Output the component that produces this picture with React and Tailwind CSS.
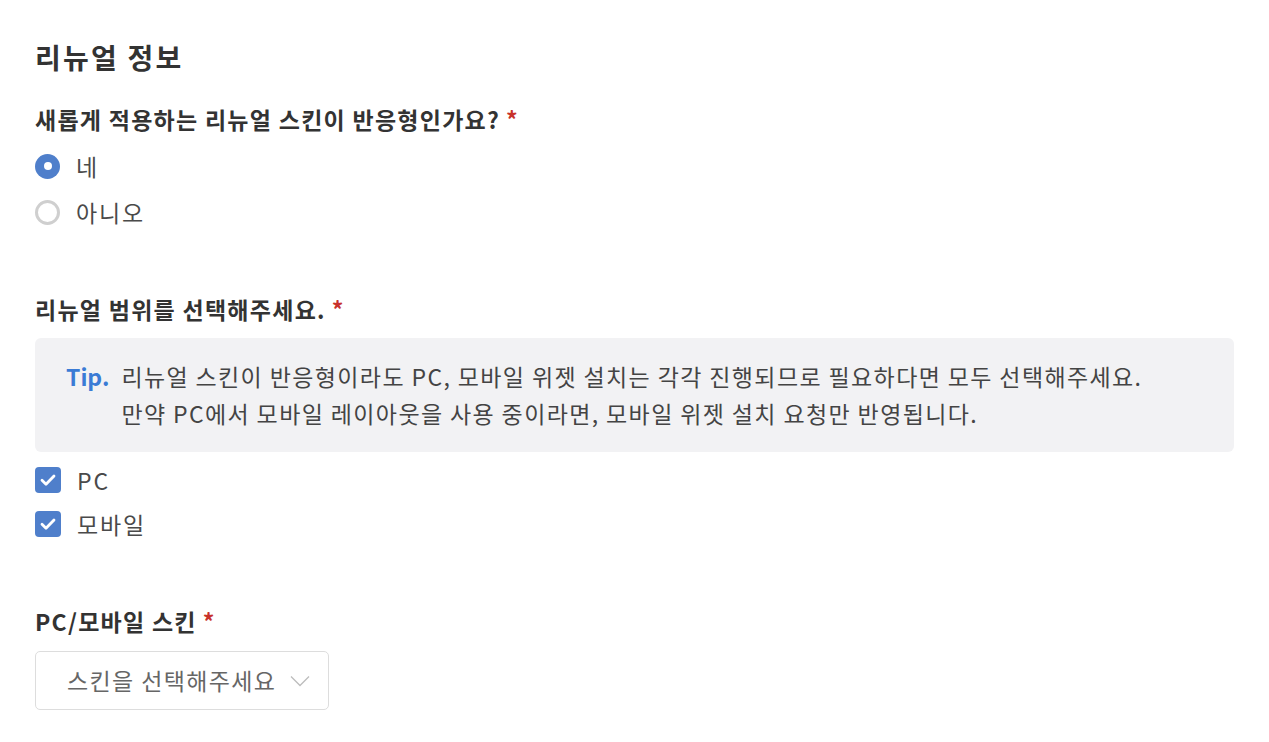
const font = { fontFamily: '"Noto Sans CJK KR", "Noto Sans", sans-serif' };

const Star = () => <span className="ml-[6px] text-[#c8322b]">*</span>;

const Radio = ({ checked, label }) => (
  <label className="flex h-[46px] items-center gap-[16px]">
    {checked ? (
      <span className="flex h-[25px] w-[25px] items-center justify-center rounded-full bg-[#4f7fcb]">
        <span className="h-[8px] w-[8px] rounded-full bg-white" />
      </span>
    ) : (
      <span className="h-[25px] w-[25px] rounded-full border-[3px] border-[#cfcfcf] bg-white" />
    )}
    <span className="text-[23px] tracking-[0.08em] text-[#4a4a4a]">{label}</span>
  </label>
);

const Checkbox = ({ label }) => (
  <label className="flex h-[44px] items-center gap-[16px]">
    <span className="flex h-[26px] w-[26px] items-center justify-center rounded-[4px] bg-[#4f7fcb]">
      <svg width="26" height="26" viewBox="0 0 26 26" fill="none">
        <path d="M7 13.3l4 4 8-8.3" stroke="white" strokeWidth="2.8" strokeLinecap="round" strokeLinejoin="round" />
      </svg>
    </span>
    <span className="text-[23px] tracking-[0.08em] text-[#4a4a4a]">{label}</span>
  </label>
);

export default function App() {
  return (
    <div className="min-h-screen bg-white px-[35px] pt-[37px]" style={font}>
      <h2 className="text-[28px] font-bold leading-[40px] tracking-[0.08em] text-[#333333]">리뉴얼 정보</h2>

      <div className="mt-[26px] text-[23px] font-bold leading-[32px] tracking-[0.055em] text-[#333333]">
        새롭게 적용하는 리뉴얼 스킨이 반응형인가요?<Star />
      </div>
      <div className="mt-[8px] flex flex-col">
        <Radio checked label="네" />
        <Radio label="아니오" />
      </div>

      <div className="mt-[58px] text-[23px] font-bold leading-[32px] tracking-[0.055em] text-[#333333]">
        리뉴얼 범위를 선택해주세요.<Star />
      </div>
      <div className="mt-[13px] flex rounded-[6px] bg-[#f2f2f4] py-[20px] pl-[31px] pr-[20px] text-[23px] leading-[37px] text-[#444444]">
        <span className="mr-[12px] font-bold text-[#3a7bd5]">Tip.</span>
        <div className="tracking-[0.06em]">
          <div>리뉴얼 스킨이 반응형이라도 PC, 모바일 위젯 설치는 각각 진행되므로 필요하다면 모두 선택해주세요.</div>
          <div>만약 PC에서 모바일 레이아웃을 사용 중이라면, 모바일 위젯 설치 요청만 반영됩니다.</div>
        </div>
      </div>
      <div className="mt-[6px] flex flex-col">
        <Checkbox label="PC" />
        <Checkbox label="모바일" />
      </div>

      <div className="mt-[59px] text-[23px] font-bold leading-[32px] tracking-[0.055em] text-[#333333]">
        PC/모바일 스킨<Star />
      </div>
      <div className="mt-[14px] flex h-[59px] w-[294px] items-center justify-between rounded-[5px] border border-[#dddddd] bg-white pl-[31px] pr-[18px]">
        <span className="text-[23px] tracking-[0.06em] text-[#666666]">스킨을 선택해주세요</span>
        <svg width="20" height="12" viewBox="0 0 20 12" fill="none">
          <path d="M1 1.5l9 9 9-9" stroke="#bdbdbd" strokeWidth="1.3" />
        </svg>
      </div>
    </div>
  );
}
